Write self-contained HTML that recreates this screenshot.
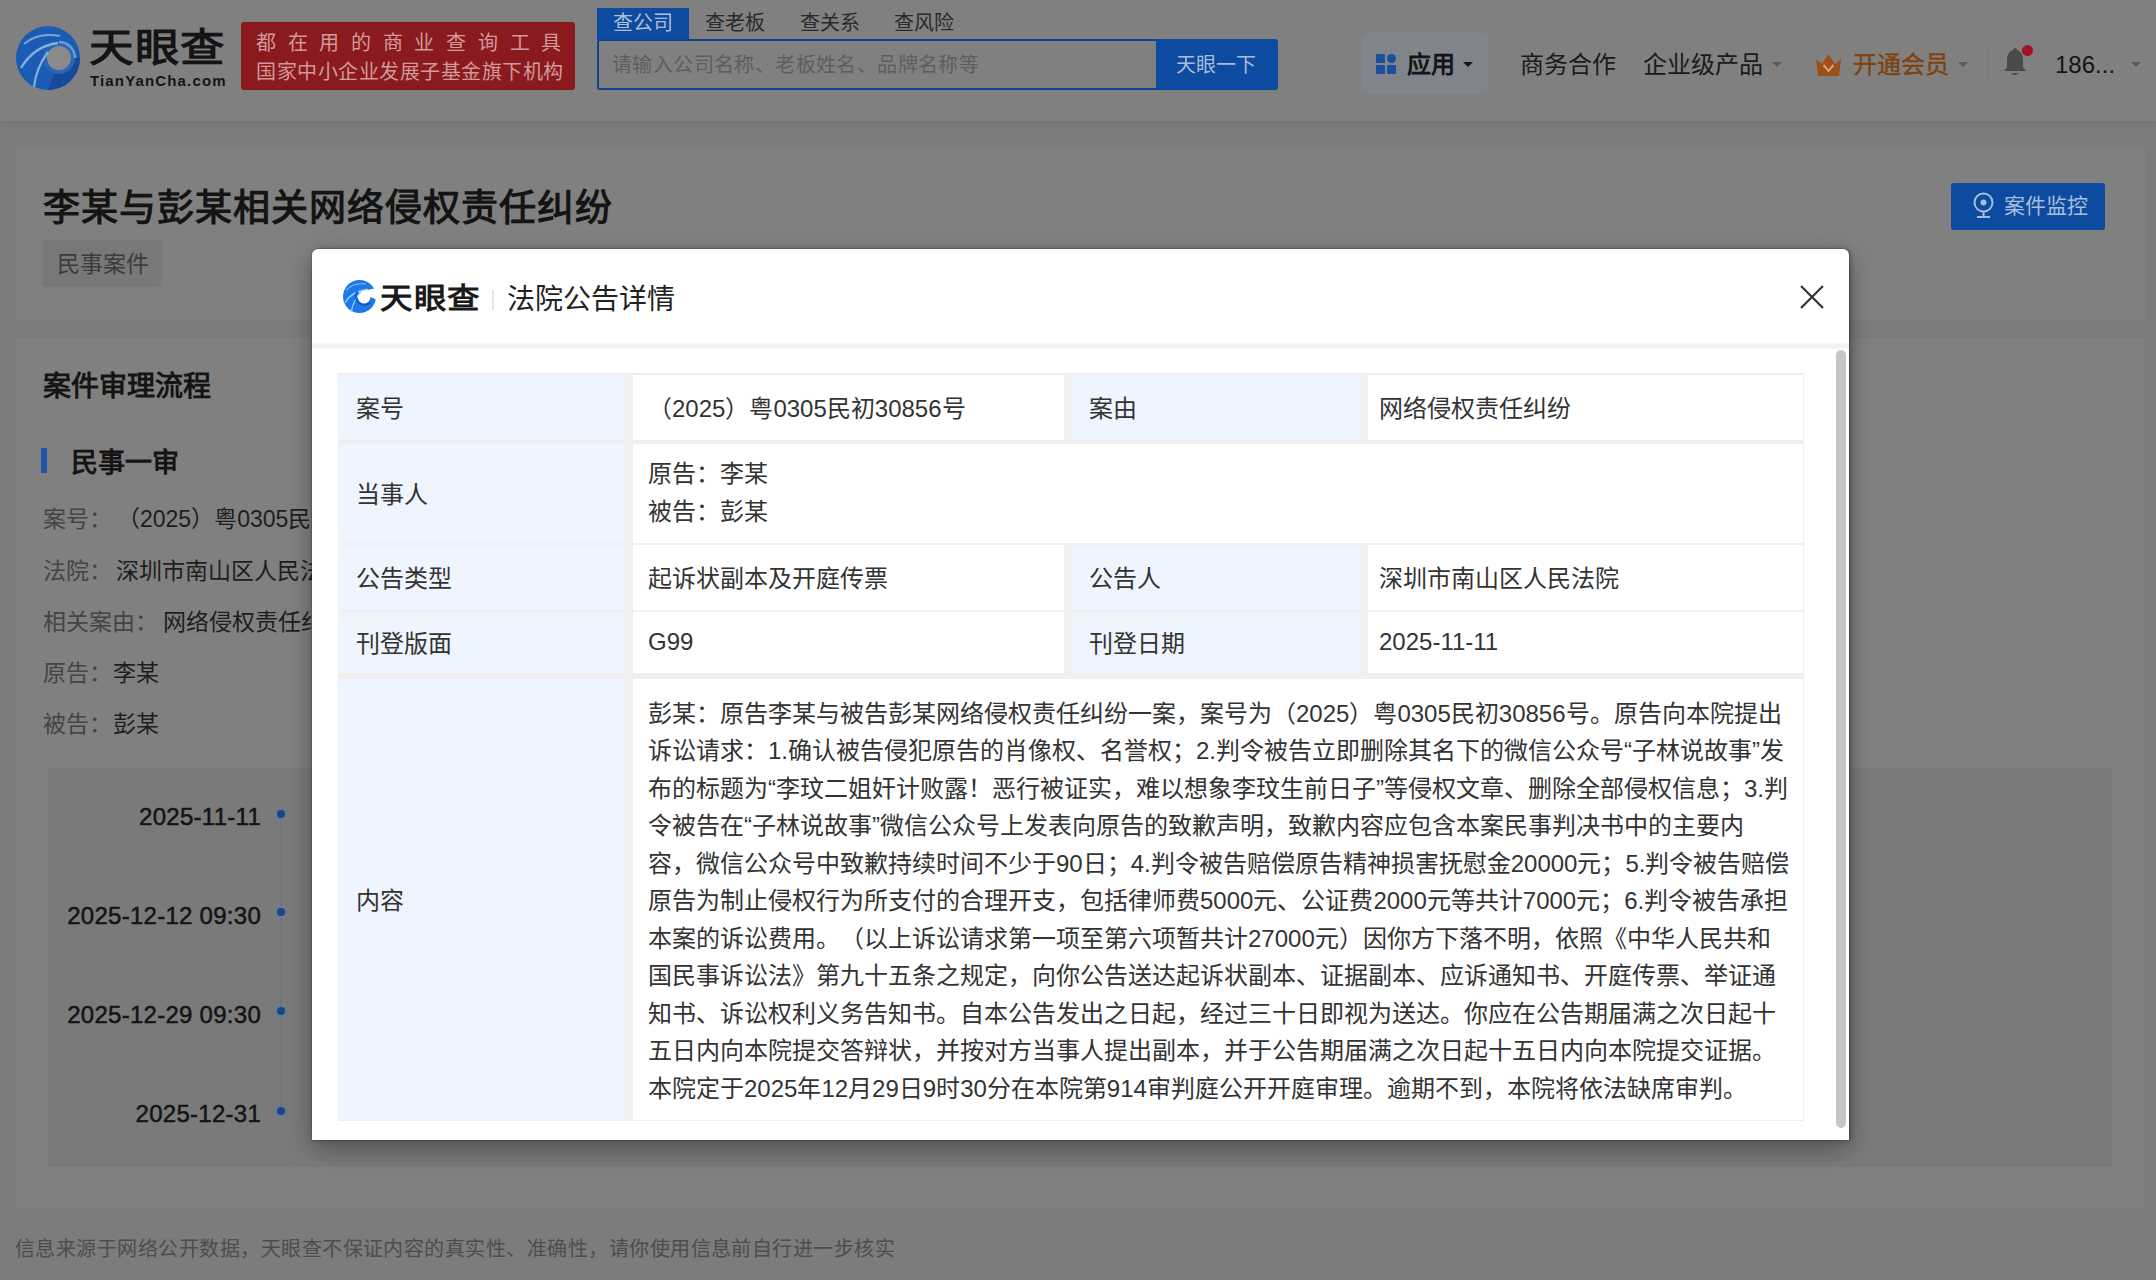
<!DOCTYPE html>
<html lang="zh-CN"><head><meta charset="utf-8">
<style>
*{margin:0;padding:0;box-sizing:border-box;}
html,body{width:2156px;height:1280px;overflow:hidden;}
body{position:relative;text-spacing-trim:space-all;background:#7c7c7c;font-family:"Liberation Sans",sans-serif;color:#1a1a1a;}
.abs{position:absolute;white-space:nowrap;}
#hdr{position:absolute;left:0;top:0;width:2156px;height:121px;background:#808080;box-shadow:0 3px 6px rgba(0,0,0,0.07);}
.card{position:absolute;background:#808080;}
#modal{position:absolute;left:312px;top:249px;width:1537px;height:891px;background:#fff;border-radius:6px 6px 0 0;box-shadow:0 0 0 1px rgba(0,0,0,0.12),2px 0 4px rgba(0,0,0,0.25),0 8px 24px rgba(0,0,0,0.35);overflow:hidden;}
#tbl{position:absolute;left:0;top:0;}
#tbl .border{position:absolute;left:338px;top:373px;width:1466px;height:748px;background:#efefef;}
.cell{position:absolute;display:flex;align-items:center;padding-bottom:2px;font-size:24px;color:#333;white-space:nowrap;}
.lab{background:#eef5fe;padding-left:17px;}
.val{background:#fff;padding-left:15px;}
.caret{position:absolute;width:0;height:0;border-left:5px solid transparent;border-right:5px solid transparent;border-top:5px solid #5a5a5a;}
</style></head><body>
<div id="hdr">
  <!-- logo -->
  <svg class="abs" style="left:16px;top:26px;" width="64" height="64" viewBox="0 0 32 32">
    <circle cx="16" cy="16" r="16" fill="#1a5cb4"/>
    <path d="M16 32 A16 16 0 0 0 32 16 L22 16 Z" fill="#16499a"/>
    <circle cx="21.5" cy="16" r="8" fill="#2a66b8"/>
    <circle cx="21.5" cy="16" r="6" fill="#8a8a8a"/>
    <path d="M21.5 8 A8 8 0 0 1 29.5 16" stroke="#6d9bd2" stroke-width="1.3" fill="none"/>
    <path d="M4 9 Q11 3 22 5" stroke="#7aa3d6" stroke-width="1.1" fill="none"/>
    <path d="M2.5 21 Q9 10 21 8.5" stroke="#86aedc" stroke-width="1.2" fill="none"/>
    <path d="M9 30.5 Q10 21 16 13" stroke="#86aedc" stroke-width="1.1" fill="none"/>
  </svg>
  <div class="abs" style="left:89px;top:24px;font-size:39px;font-weight:bold;color:#141414;line-height:48px;letter-spacing:1px;transform:scaleX(1.14);transform-origin:0 0;">天眼查</div>
  <div class="abs" style="left:90px;top:72px;font-size:15px;font-weight:bold;color:#141414;letter-spacing:1.15px;line-height:18px;">TianYanCha.com</div>
  <div class="abs" style="left:241px;top:22px;width:334px;height:68px;background:#8a1a1d;border-radius:3px;"></div>
  <div class="abs" style="left:256px;top:29px;font-size:20px;color:#d09a9a;letter-spacing:11.7px;line-height:28px;">都在用的商业查询工具</div>
  <div class="abs" style="left:256px;top:58px;font-size:20px;letter-spacing:0.5px;color:#d09a9a;line-height:28px;">国家中小企业发展子基金旗下机构</div>
  <!-- tabs -->
  <div class="abs" style="left:597px;top:8px;width:92px;height:32px;background:#0c4b9f;"></div>
  <div class="abs" style="left:613px;top:8px;font-size:20px;color:#b0bdd4;line-height:30px;">查公司</div>
  <div class="abs" style="left:705px;top:8px;font-size:20px;color:#2a2a2a;line-height:30px;">查老板</div>
  <div class="abs" style="left:800px;top:8px;font-size:20px;color:#2a2a2a;line-height:30px;">查关系</div>
  <div class="abs" style="left:894px;top:8px;font-size:20px;color:#2a2a2a;line-height:30px;">查风险</div>
  <div class="abs" style="left:597px;top:39px;width:560px;height:51px;border:2px solid #11448f;border-right:none;border-radius:3px 0 0 3px;"></div>
  <div class="abs" style="left:612px;top:50px;font-size:20px;letter-spacing:0.4px;color:#5e5e5e;line-height:30px;">请输入公司名称、老板姓名、品牌名称等</div>
  <div class="abs" style="left:1156px;top:39px;width:122px;height:51px;background:#0c4b9f;border-radius:0 3px 3px 0;"></div>
  <div class="abs" style="left:1176px;top:50px;font-size:20px;color:#a9bcd9;line-height:30px;">天眼一下</div>
  <!-- right nav -->
  <div class="abs" style="left:1361px;top:33px;width:127px;height:61px;background:#80858d;border-radius:4px;"></div>
  <svg class="abs" style="left:1376px;top:54px;" width="21" height="21" viewBox="0 0 21 21">
    <rect x="0" y="0" width="9" height="9" rx="1" fill="#1b4f9c"/>
    <rect x="0" y="11" width="9" height="9" rx="1" fill="#1b4f9c"/>
    <rect x="11" y="11" width="9" height="9" rx="1" fill="#1b4f9c"/>
    <rect x="11" y="0" width="9" height="9" rx="4.5" fill="#1b4f9c"/>
  </svg>
  <div class="abs" style="left:1407px;top:48px;font-size:24px;font-weight:bold;color:#141414;line-height:34px;">应用</div>
  <div class="caret" style="left:1463px;top:62px;border-top-color:#141414;"></div>
  <div class="abs" style="left:1520px;top:48px;font-size:24px;color:#1a1a1a;line-height:34px;">商务合作</div>
  <div class="abs" style="left:1643px;top:48px;font-size:24px;color:#1a1a1a;line-height:34px;">企业级产品</div>
  <div class="caret" style="left:1772px;top:62px;"></div>
  <svg class="abs" style="left:1815px;top:53px;" width="27" height="24" viewBox="0 0 27 24">
    <path d="M1 6 L7 11 L13.5 1 L20 11 L26 6 L24 23 L3 23 Z" fill="#9e4e17"/>
    <path d="M8.5 12 L13.5 18 L18.5 12" stroke="#d8a27a" stroke-width="2" fill="none"/>
  </svg>
  <div class="abs" style="left:1853px;top:48px;font-size:24px;color:#7e420f;line-height:34px;-webkit-text-stroke:0.35px #7e420f;">开通会员</div>
  <div class="caret" style="left:1958px;top:62px;"></div>
  <div class="abs" style="left:1987px;top:48px;width:1px;height:32px;background:#797979;"></div>
  <svg class="abs" style="left:2002px;top:47px;" width="26" height="31" viewBox="0 0 26 31">
    <path d="M13 3 C7 3 5 8 5 13 L5 20 L2 24 L24 24 L21 20 L21 13 C21 8 19 3 13 3 Z" fill="#4a4a4a"/>
    <circle cx="13" cy="3" r="2" fill="#4a4a4a"/>
    <path d="M9 26 Q13 30 17 26 Z" fill="#4a4a4a"/>
  </svg>
  <div class="abs" style="left:2022px;top:45px;width:11px;height:11px;border-radius:50%;background:#a50f27;"></div>
  <div class="abs" style="left:2055px;top:48px;font-size:24px;color:#141414;line-height:34px;">186...</div>
  <div class="caret" style="left:2131px;top:62px;"></div>
</div>

<!-- title card -->
<div class="card" style="left:16px;top:149px;width:2129px;height:171px;"></div>
<div class="abs" style="left:43px;top:183px;font-size:37px;letter-spacing:1px;font-weight:bold;color:#141414;line-height:52px;">李某与彭某相关网络侵权责任纠纷</div>
<div class="abs" style="left:42px;top:240px;width:120px;height:47px;background:#787878;border-radius:3px;"></div>
<div class="abs" style="left:57px;top:248px;font-size:23px;color:#3c3c3c;line-height:32px;">民事案件</div>
<div class="abs" style="left:1951px;top:183px;width:154px;height:47px;background:#0c4b9f;border-radius:3px;"></div>
<svg class="abs" style="left:1972px;top:192px;" width="23" height="27" viewBox="0 0 23 27">
  <circle cx="11.5" cy="10.5" r="9" stroke="#a9bcd9" stroke-width="2" fill="none"/>
  <circle cx="11.5" cy="10.5" r="3" fill="#a9bcd9"/>
  <path d="M11.5 19.5 L11.5 24 M5 25 L18 25" stroke="#a9bcd9" stroke-width="2"/>
</svg>
<div class="abs" style="left:2004px;top:191px;font-size:21px;color:#a9bcd9;line-height:30px;">案件监控</div>

<!-- process card -->
<div class="card" style="left:16px;top:338px;width:2128px;height:870px;"></div>
<div class="abs" style="left:43px;top:368px;font-size:28px;font-weight:bold;color:#141414;line-height:38px;">案件审理流程</div>
<div class="abs" style="left:41px;top:448px;width:6px;height:25px;background:#1d56a6;"></div>
<div class="abs" style="left:71px;top:444px;font-size:27px;font-weight:bold;color:#141414;line-height:38px;">民事一审</div>
<div class="abs" style="left:43px;top:503px;font-size:23px;color:#444;line-height:32px;">案号：<span style="color:#1e1e1e;margin-left:5px;">（2025）粤0305民初30856号</span></div>
<div class="abs" style="left:43px;top:555px;font-size:23px;color:#444;line-height:32px;">法院：<span style="color:#1e1e1e;margin-left:4px;">深圳市南山区人民法院</span></div>
<div class="abs" style="left:43px;top:606px;font-size:23px;color:#444;line-height:32px;">相关案由：<span style="color:#1e1e1e;margin-left:5px;">网络侵权责任纠纷</span></div>
<div class="abs" style="left:43px;top:657px;font-size:23px;color:#444;line-height:32px;">原告：<span style="color:#1e1e1e;margin-left:1px;">李某</span></div>
<div class="abs" style="left:43px;top:708px;font-size:23px;color:#444;line-height:32px;">被告：<span style="color:#1e1e1e;margin-left:1px;">彭某</span></div>
<div class="abs" style="left:48px;top:768px;width:2064px;height:399px;background:#7a7a7a;"></div>
<div class="abs" style="left:280px;top:814px;width:2px;height:297px;background:#6f737b;"></div>
<div class="abs" style="left:0px;top:801px;width:261px;text-align:right;font-size:24px;letter-spacing:0.27px;color:#141414;line-height:32px;-webkit-text-stroke:0.5px #141414;">2025-11-11</div>
<div class="abs" style="left:0px;top:900px;width:261px;text-align:right;font-size:24px;letter-spacing:0.27px;color:#141414;line-height:32px;-webkit-text-stroke:0.5px #141414;">2025-12-12 09:30</div>
<div class="abs" style="left:0px;top:999px;width:261px;text-align:right;font-size:24px;letter-spacing:0.27px;color:#141414;line-height:32px;-webkit-text-stroke:0.5px #141414;">2025-12-29 09:30</div>
<div class="abs" style="left:0px;top:1098px;width:261px;text-align:right;font-size:24px;letter-spacing:0.27px;color:#141414;line-height:32px;-webkit-text-stroke:0.5px #141414;">2025-12-31</div>
<div class="abs" style="left:275px;top:808px;width:12px;height:12px;border-radius:50%;background:#1f4580;border:2px solid #5f7ca3;"></div>
<div class="abs" style="left:275px;top:906px;width:12px;height:12px;border-radius:50%;background:#1f4580;border:2px solid #5f7ca3;"></div>
<div class="abs" style="left:275px;top:1005px;width:12px;height:12px;border-radius:50%;background:#1f4580;border:2px solid #5f7ca3;"></div>
<div class="abs" style="left:275px;top:1105px;width:12px;height:12px;border-radius:50%;background:#1f4580;border:2px solid #5f7ca3;"></div>

<div class="abs" style="left:15px;top:1234px;font-size:20px;letter-spacing:0.47px;color:#4d4d4d;line-height:30px;">信息来源于网络公开数据，天眼查不保证内容的真实性、准确性，请你使用信息前自行进一步核实</div>

<div id="modal">
  <svg class="abs" style="left:31px;top:31px;" width="33" height="33" viewBox="0 0 32 32">
    <circle cx="16" cy="16" r="16" fill="#1e78e6"/>
    <path d="M3 10 Q10 2 22 4" stroke="#7cc4ff" stroke-width="1.1" fill="none"/>
    <path d="M2 22 Q8 11 24 9" stroke="#8fd0ff" stroke-width="1.3" fill="none"/>
    <circle cx="20.5" cy="16.5" r="6.2" fill="#fff"/>
    <path d="M20.5 10.3 L32 8 L32 19 L26.7 16.5 Z" fill="#fff"/>
    <path d="M8 31 Q10 20 17 12" stroke="#9ad6ff" stroke-width="1.2" fill="none"/>
    <path d="M14 11 A7.5 7.5 0 1 0 27 21" stroke="#0d5ac4" stroke-width="1.6" fill="none"/>
  </svg>
  <div class="abs" style="left:68px;top:30px;font-size:29px;font-weight:bold;color:#1a1a1a;line-height:40px;letter-spacing:1px;transform:scaleX(1.12);transform-origin:0 0;">天眼查</div>
  <div class="abs" style="left:180px;top:41px;width:2px;height:20px;background:#e6e6e6;"></div>
  <div class="abs" style="left:195px;top:31px;font-size:28px;color:#222;line-height:40px;">法院公告详情</div>
  <svg class="abs" style="left:1487px;top:35px;" width="26" height="26" viewBox="0 0 26 26">
    <path d="M2 2 L24 24 M24 2 L2 24" stroke="#333" stroke-width="2.2"/>
  </svg>
  <div class="abs" style="left:0;top:94px;width:1537px;height:6px;background:linear-gradient(#fafafa,#f0f0f0 40%,#f8f8f8);"></div>
  <div class="abs" style="left:1524px;top:101px;width:10px;height:778px;border-radius:5px;background:#c6c6c6;"></div>
</div>
<div id="tbl">
  <div class="border"></div>
  <div class="cell lab" style="left:339px;top:375px;width:285px;height:65px;">案号</div>
  <div class="cell val" style="left:633px;top:375px;width:431px;height:65px;">（2025）粤0305民初30856号</div>
  <div class="cell lab" style="left:1072px;top:375px;width:288px;height:65px;">案由</div>
  <div class="cell val" style="padding-left:11px;left:1368px;top:375px;width:435px;height:65px;">网络侵权责任纠纷</div>

  <div class="cell lab" style="left:339px;top:444px;width:285px;height:99px;">当事人</div>
  <div class="cell val" style="left:633px;top:444px;width:1170px;height:99px;line-height:38px;">原告：李某<br>被告：彭某</div>

  <div class="cell lab" style="left:339px;top:545px;width:285px;height:65px;">公告类型</div>
  <div class="cell val" style="left:633px;top:545px;width:431px;height:65px;">起诉状副本及开庭传票</div>
  <div class="cell lab" style="left:1072px;top:545px;width:288px;height:65px;">公告人</div>
  <div class="cell val" style="padding-left:11px;left:1368px;top:545px;width:435px;height:65px;">深圳市南山区人民法院</div>

  <div class="cell lab" style="left:339px;top:612px;width:285px;height:61px;">刊登版面</div>
  <div class="cell val" style="left:633px;top:612px;width:431px;height:61px;">G99</div>
  <div class="cell lab" style="left:1072px;top:612px;width:288px;height:61px;">刊登日期</div>
  <div class="cell val" style="padding-left:11px;left:1368px;top:612px;width:435px;height:61px;">2025-11-11</div>

  <div class="cell lab" style="left:339px;top:679px;width:285px;height:441px;">内容</div>
  <div class="cell val" style="left:633px;top:679px;width:1170px;height:441px;line-height:37.5px;padding-bottom:0;padding-top:3px;">彭某：原告李某与被告彭某网络侵权责任纠纷一案，案号为（2025）粤0305民初30856号。原告向本院提出<br>诉讼请求：1.确认被告侵犯原告的肖像权、名誉权；2.判令被告立即删除其名下的微信公众号“子林说故事”发<br>布的标题为“李玟二姐奸计败露！恶行被证实，难以想象李玟生前日子”等侵权文章、删除全部侵权信息；3.判<br>令被告在“子林说故事”微信公众号上发表向原告的致歉声明，致歉内容应包含本案民事判决书中的主要内<br>容，微信公众号中致歉持续时间不少于90日；4.判令被告赔偿原告精神损害抚慰金20000元；5.判令被告赔偿<br>原告为制止侵权行为所支付的合理开支，包括律师费5000元、公证费2000元等共计7000元；6.判令被告承担<br>本案的诉讼费用。（以上诉讼请求第一项至第六项暂共计27000元）因你方下落不明，依照《中华人民共和<br>国民事诉讼法》第九十五条之规定，向你公告送达起诉状副本、证据副本、应诉通知书、开庭传票、举证通<br>知书、诉讼权利义务告知书。自本公告发出之日起，经过三十日即视为送达。你应在公告期届满之次日起十<br>五日内向本院提交答辩状，并按对方当事人提出副本，并于公告期届满之次日起十五日内向本院提交证据。<br>本院定于2025年12月29日9时30分在本院第914审判庭公开开庭审理。逾期不到，本院将依法缺席审判。</div>
</div>
</body></html>
